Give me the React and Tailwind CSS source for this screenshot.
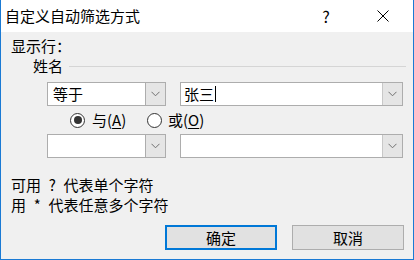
import React from 'react';

const font = { fontFamily: '"Noto Sans CJK SC", "Noto Sans", sans-serif' };

function Chevron() {
  return (
    <svg width="9" height="6" viewBox="0 0 9 6" fill="none" stroke="#707070" strokeWidth="1">
      <path d="M0.5 0.8 L4.5 4.8 L8.5 0.8" />
    </svg>
  );
}

// plain drop-down list (field white, arrow part grey)
function DropList({ value, width }) {
  return (
    <div className={`flex h-[24px] ${width} border border-[#adadad] bg-white`}>
      <div className="flex flex-1 items-center pl-[5px] text-[15px] leading-[20px] text-black">{value}</div>
      <div className="flex w-[20px] items-center justify-center border-l border-[#adadad] bg-[#e5e5e5]">
        <Chevron />
      </div>
    </div>
  );
}

// editable combo box
function EditCombo({ value, caret, width }) {
  return (
    <div className={`flex h-[24px] ${width} border border-[#adadad] bg-white`}>
      <div className="flex flex-1 items-center pl-[3px] text-[15px] leading-[20px] text-black">
        {value}
        {caret && <span className="ml-[1px] inline-block h-[16px] w-px bg-black" />}
      </div>
      <div className="flex w-[20px] items-center justify-center border-l border-[#c8c8c8] bg-[#e5e5e5]">
        <Chevron />
      </div>
    </div>
  );
}

function Radio({ checked }) {
  return (
    <span className="flex h-[15px] w-[15px] items-center justify-center rounded-full border border-[#333333] bg-white">
      {checked && <span className="h-[8px] w-[8px] rounded-full bg-[#333333]" />}
    </span>
  );
}

// half-width cell, like a fixed-pitch ASCII char
function Half({ children }) {
  return <span className="inline-block w-[7.5px] text-center">{children}</span>;
}

export default function App() {
  return (
    <div className="flex h-[260px] w-[414px] flex-col border-x border-b border-[#1a7ad4] bg-[#f0f0f0] text-black" style={font}>
      {/* title bar */}
      <div className="flex h-[32px] shrink-0 items-center bg-white">
        <div className="pl-[4px] text-[15px] leading-[20px]">自定义自动筛选方式</div>
        <div className="flex-1" />
        <div className="flex w-[46px] items-center justify-center text-[16px] leading-[20px]">?</div>
        <div className="ml-[11px] mr-[7px] flex w-[46px] items-center justify-center">
          <svg width="12" height="12" viewBox="0 0 12 12" stroke="#000" strokeWidth="1">
            <path d="M0.5 0.5 L11.5 11.5 M11.5 0.5 L0.5 11.5" />
          </svg>
        </div>
      </div>

      {/* body */}
      <div className="flex flex-1 flex-col pl-[10px] text-[15px] leading-[20px]">
        <div className="pt-[4px]">显示行：</div>
        <div className="flex h-[20px] items-center">
          <span className="ml-[22px]">姓名</span>
          <span className="ml-[6px] mr-[7px] h-px flex-1 bg-[#d5d5d5]" />
        </div>

        <div className="ml-[36px] mt-[6px] flex gap-[14px]">
          <DropList value="等于" width="w-[119px]" />
          <EditCombo value="张三" caret width="w-[223px]" />
        </div>

        <div className="ml-[59px] flex h-[28px] items-center">
          <label className="flex w-[77px] items-center gap-[7px]">
            <Radio checked />
            <span>与(<span className="underline underline-offset-2">A</span>)</span>
          </label>
          <label className="flex items-center gap-[6px]">
            <Radio />
            <span>或(<span className="underline underline-offset-2">O</span>)</span>
          </label>
        </div>

        <div className="ml-[36px] flex gap-[14px]">
          <DropList value="" width="w-[119px]" />
          <EditCombo value="" width="w-[223px]" />
        </div>

        <div className="mt-[17px] flex">
          <span>可用</span>
          <Half> </Half>
          <Half>?</Half>
          <Half> </Half>
          <span>代表单个字符</span>
        </div>
        <div className="flex">
          <span>用</span>
          <Half> </Half>
          <Half>*</Half>
          <Half> </Half>
          <span>代表任意多个字符</span>
        </div>

        <div className="mt-[10px] flex justify-end gap-[15px] pr-[9px]">
          <button className="flex h-[25px] w-[112px] items-center justify-center border-2 border-[#0078d7] bg-[#e1e1e1] text-[15px]">
            确定
          </button>
          <button className="flex h-[25px] w-[112px] items-center justify-center border border-[#adadad] bg-[#e1e1e1] text-[15px]">
            取消
          </button>
        </div>
      </div>
    </div>
  );
}
